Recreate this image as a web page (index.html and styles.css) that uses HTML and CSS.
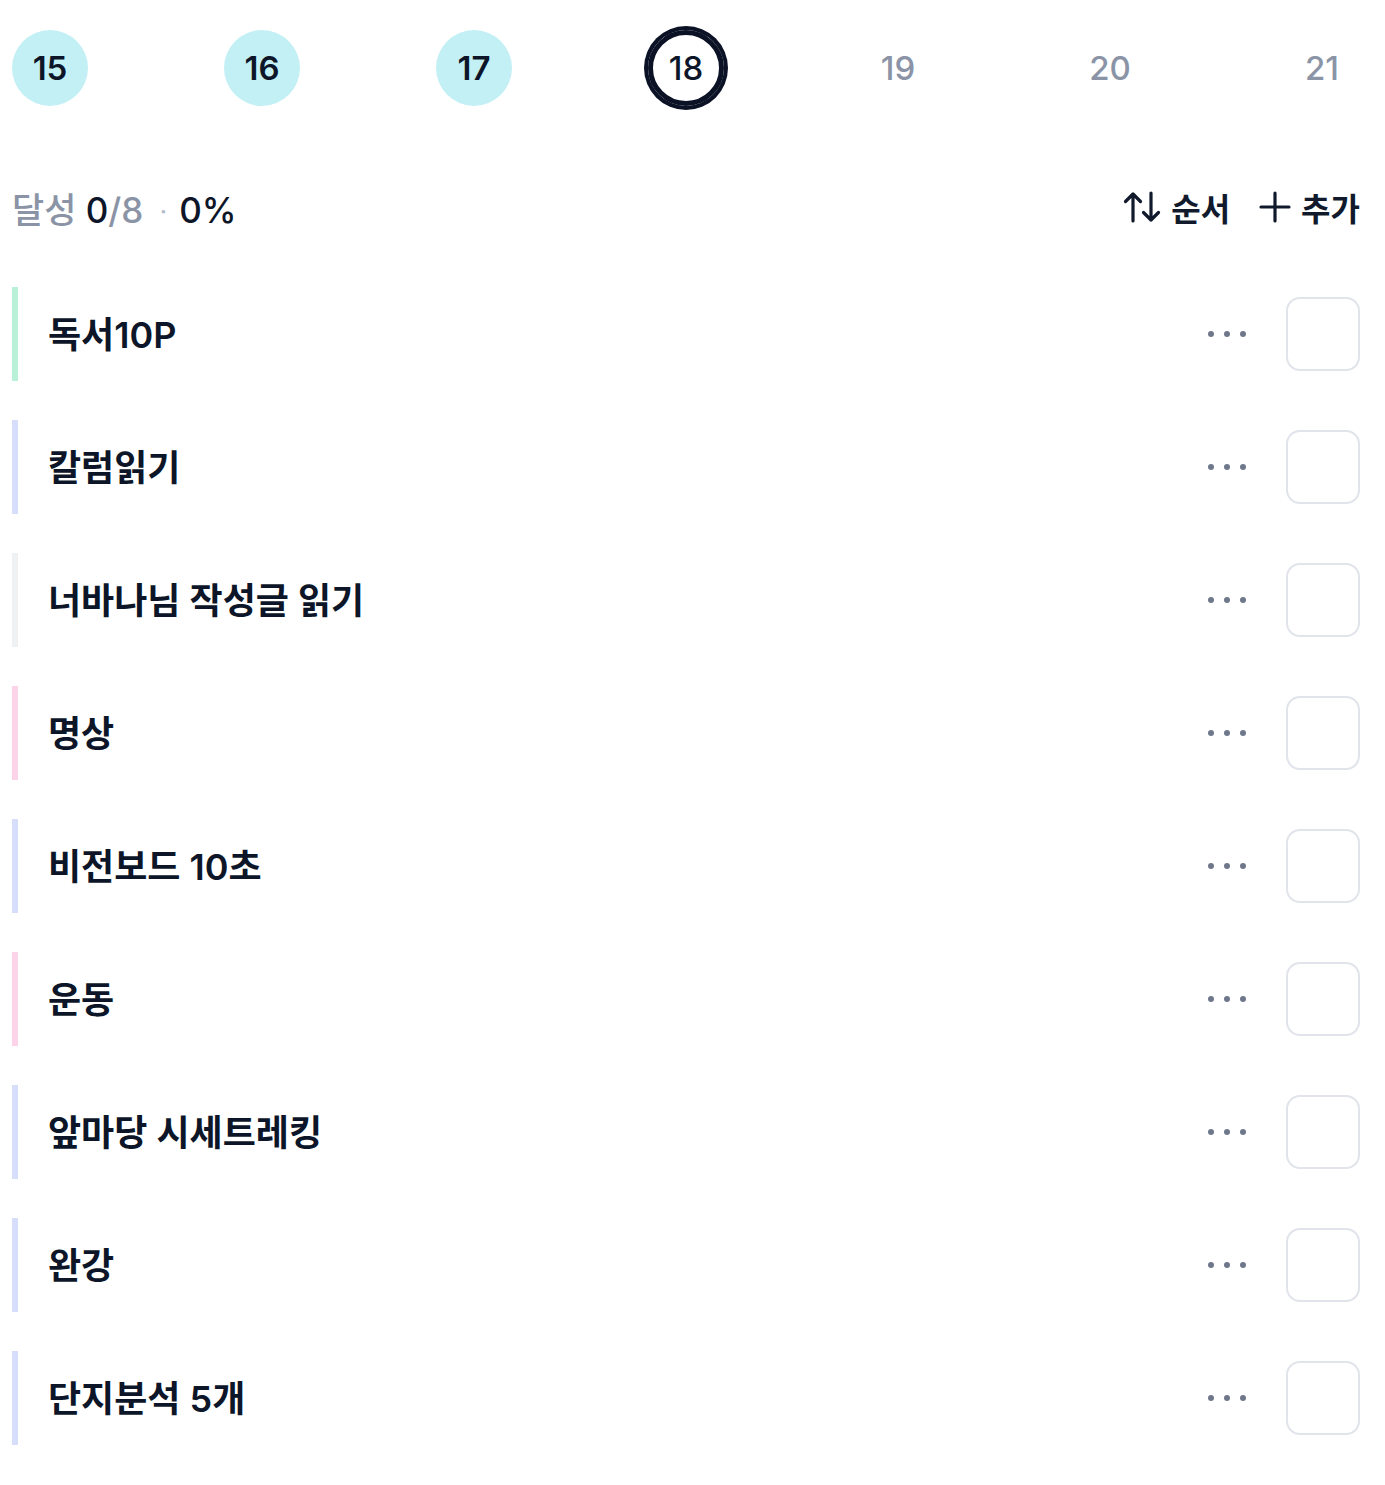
FILE: index.html
```html
<!DOCTYPE html>
<html lang="ko">
    <head>
        <title>습관 체크</title>
        <meta charset="UTF-8">
        <link rel="stylesheet" href="styles.css">
    </head>
    <body>
        <div class="page">
            <div class="week">
                <span class="day done">15</span>
                <span class="day done">16</span>
                <span class="day done">17</span>
                <span class="day today">18</span>
                <span class="day">19</span>
                <span class="day">20</span>
                <span class="day">21</span>
            </div>

            <div class="summary">
                <div class="rate">
                    <span class="muted">달성</span>
                    <span class="strong">0</span><span class="muted">/8</span>
                    <span class="dot-sep">·</span>
                    <span class="strong">0%</span>
                </div>
                <div class="actions">
                    <button class="action" type="button">
                        <svg width="38" height="34" viewBox="0 0 38 34" fill="none" stroke="currentColor" stroke-width="3.2" stroke-linecap="round" stroke-linejoin="round">
                            <path d="M10 31V4M2.5 11.5L10 4l7.5 7.5"/>
                            <path d="M28 3v27M20.5 22.5L28 30l7.5-7.5"/>
                        </svg>
                        순서
                    </button>
                    <button class="action" type="button">
                        <svg width="32" height="32" viewBox="0 0 32 32" fill="none" stroke="currentColor" stroke-width="3.2" stroke-linecap="round">
                            <path d="M16 2v28M2 16h28"/>
                        </svg>
                        추가
                    </button>
                </div>
            </div>

            <ul class="habits">
                <li class="habit"><span class="bar mint"></span><span class="name">독서10P</span><span class="more"><i></i><i></i><i></i></span><span class="check"></span></li>
                <li class="habit"><span class="bar blue"></span><span class="name">칼럼읽기</span><span class="more"><i></i><i></i><i></i></span><span class="check"></span></li>
                <li class="habit"><span class="bar grey"></span><span class="name">너바나님 작성글 읽기</span><span class="more"><i></i><i></i><i></i></span><span class="check"></span></li>
                <li class="habit"><span class="bar pink"></span><span class="name">명상</span><span class="more"><i></i><i></i><i></i></span><span class="check"></span></li>
                <li class="habit"><span class="bar blue"></span><span class="name">비전보드 10초</span><span class="more"><i></i><i></i><i></i></span><span class="check"></span></li>
                <li class="habit"><span class="bar pink"></span><span class="name">운동</span><span class="more"><i></i><i></i><i></i></span><span class="check"></span></li>
                <li class="habit"><span class="bar blue"></span><span class="name">앞마당 시세트레킹</span><span class="more"><i></i><i></i><i></i></span><span class="check"></span></li>
                <li class="habit"><span class="bar blue"></span><span class="name">완강</span><span class="more"><i></i><i></i><i></i></span><span class="check"></span></li>
                <li class="habit"><span class="bar blue"></span><span class="name">단지분석 5개</span><span class="more"><i></i><i></i><i></i></span><span class="check"></span></li>
            </ul>
        </div>
    </body>
</html>
```

FILE: styles.css
```css
body {
    margin: 0;
    background: #fff;
    color: #0d1628;
    font-family: Inter, "Noto Sans CJK KR", sans-serif;
}
.page {
    padding: 30px 25px 0 12px;
}

/* week strip */
.week {
    display: flex;
    justify-content: space-between;
}
.day {
    width: 76px;
    height: 76px;
    border-radius: 50%;
    box-sizing: border-box;
    display: flex;
    align-items: center;
    justify-content: center;
    font-size: 33px;
    font-weight: 500;
    color: #8a94a6;
}
.day.done {
    background: #c3f0f4;
    color: #0d1628;
    font-weight: 600;
}
.day.today {
    border: 5px solid #0b1226;
    box-shadow: 0 0 0 4px #0b1226;
    color: #0d1628;
    font-weight: 500;
}

/* summary row */
.summary {
    display: flex;
    justify-content: space-between;
    align-items: center;
    margin-top: 79px;
    height: 44px;
}
.rate {
    font-size: 35px;
    font-weight: 500;
}
.muted {
    color: #8a94a6;
}
.strong {
    color: #0d1628;
}
.dot-sep {
    color: #b4bbc7;
    font-size: 24px;
    margin: 0 3px 0 7px;
    vertical-align: 3px;
}
.actions {
    display: flex;
    gap: 29px;
}
.action {
    display: flex;
    align-items: center;
    gap: 10px;
    padding: 0;
    border: 0;
    background: none;
    color: #111a2c;
    font-family: inherit;
    font-size: 32px;
    font-weight: 600;
}

/* habit list */
.habits {
    list-style: none;
    margin: 58px 0 0;
    padding: 0;
    display: flex;
    flex-direction: column;
    gap: 39px;
}
.habit {
    display: flex;
    align-items: center;
    height: 94px;
}
.bar {
    width: 6px;
    align-self: stretch;
    margin-right: 30px;
}
.bar.mint { background: #b8f1d8; }
.bar.blue { background: #d6defb; }
.bar.grey { background: #f0f1f3; }
.bar.pink { background: #fdd3ea; }
.name {
    flex: 1;
    font-size: 36px;
    font-weight: 600;
    padding-bottom: 5px;
}
.more {
    display: flex;
    gap: 10px;
    margin-right: 40px;
}
.more i {
    width: 6px;
    height: 6px;
    border-radius: 50%;
    background: #6f788a;
}
.check {
    width: 74px;
    height: 74px;
    box-sizing: border-box;
    border: 2px solid #e1e4ea;
    border-radius: 14px;
}
```
